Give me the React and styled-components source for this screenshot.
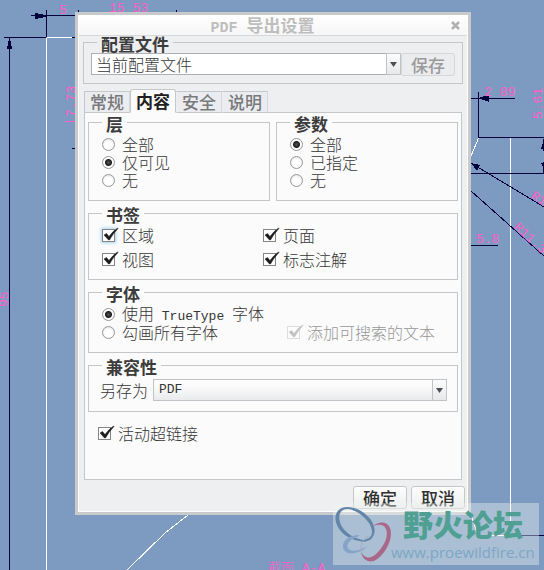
import React, { useState } from "react";
import styled, { createGlobalStyle } from "styled-components";


const GlobalStyle = createGlobalStyle`
* { box-sizing: border-box; }
body {
    margin: 0;
    font-family: "Noto Sans CJK SC", sans-serif;
    font-size: 16px;
    font-weight: 300;
    color: #363636;
}
button, select, input { font: inherit; color: inherit; margin: 0; }
`

const Page = styled.main`
position: relative;
min-height: 100vh;
padding: 12px 73px 55px 75px;
overflow: hidden;
background: #7d9bc0;
`

const Drawing = styled.svg`
position: absolute;
inset: 0;
width: 100%;
height: 100%;
& .edge { stroke: #fff; fill: none; }
& .dim { stroke: #00003c; fill: none; }
& .head { fill: #00003c; }
& text {
    fill: #ff5fc8;
    font-family: "Liberation Mono", "Noto Sans CJK SC", monospace;
    font-size: 13px;
}
`

const Dialog = styled.section`
position: relative;
border: 3px solid #c8cacc;
background: #eeeff1;
box-shadow: inset 0 0 0 1px #fff;
padding: 0 1px 3px;
`

const TitleBar = styled.header`
display: flex;
align-items: center;
height: 21px;
padding: 0 7px 0 9px;
border-bottom: 1px solid #d6d8da;
background: linear-gradient(#fff, #f6f6f7);
`

const Title = styled.h1`
flex: 1;
margin: 0;
padding: 2px 14px 0 0;
text-align: center;
font-size: 17px;
line-height: 20px;
font-weight: 700;
color: #bebebe;
`

const CloseButton = styled.button`
display: flex;
padding: 0;
border: none;
background: none;
color: #b0b0b0;
`

const Latin = styled.span`
font-family: "Liberation Mono", monospace;
font-size: ${p => p.$large ? "15px" : "13px"};
line-height: 16px;
white-space: pre;
`

const Group = styled.fieldset`
min-width: 0;
margin: ${p => p.$margin || 0};
padding: ${p => p.$padding || "7px 10px 11px 13px"};
border: 1px solid #c4c6c9;
`

const GroupTitle = styled.legend`
margin-left: ${p => p.$inset || 0};
padding: 3px 4px 0;
font-size: 17px;
line-height: 9px;
font-weight: 700;
color: #3c3c3c;
`

const ProfileRow = styled.div`
display: flex;
align-items: flex-start;
`

const SelectBox = styled.span`
position: relative;
display: flex;
flex: 1;
height: 22px;
`

const Select = styled.select`
appearance: none;
width: 100%;
height: 22px;
padding: 0 20px 0 ${p => p.$plain ? "4px" : "5px"};
border: 1px solid ${p => p.$plain ? "#aeb0b2" : "#c0c4c8"};
border-radius: 0;
background: ${p => p.$plain ? "#fff" : "linear-gradient(#fcfcfc 30%, #e8eaec)"};
font-family: ${p => p.$plain ? "inherit" : `"Liberation Mono", monospace`};
font-size: ${p => p.$plain ? "16px" : "13px"};
line-height: 20px;
`

const SelectArrow = styled.span`
position: absolute;
top: 0;
right: 0;
display: flex;
align-items: center;
justify-content: center;
width: 15px;
height: 22px;
border: 1px solid #c0c4c8;
background: linear-gradient(#fcfcfc, #e6e8ea);
pointer-events: none;
`

const Button = styled.button`
width: 54px;
height: 23px;
padding: 0;
border: 1px solid #c4c8cb;
border-radius: 3px;
background: linear-gradient(#fdfdfd, #eceded);
font-size: 17px;
line-height: 20px;
font-weight: 500;
color: #303030;
&:disabled {
    border-color: #d4d6d8;
    background: #ebecee;
    color: #9a9a9a;
}
`

const TabList = styled.div`
display: flex;
align-items: flex-end;
margin: 5px 5px -1px;
`

const Tab = styled.button`
position: relative;
width: 46px;
height: ${p => p.$active ? "24px" : "22px"};
padding: 0 0 ${p => p.$active ? "1px" : "0"};
border: 1px solid #c4c8cb;
border-left-color: ${p => p.$active || p.$first ? "#c4c8cb" : "#eceef0"};
border-right-color: ${p => p.$active ? "#c4c8cb" : "#d6d9dc"};
border-bottom-color: ${p => p.$active ? "#fbfbfb" : "#c4c8cb"};
border-radius: ${p => p.$active ? "3px 3px 0 0" : "0"};
background: ${p => p.$active ? "#fbfbfb" : "#ebecef"};
font-size: 17px;
line-height: 20px;
font-weight: ${p => p.$active ? 700 : 500};
color: ${p => p.$active ? "#202020" : "#77797c"};
`

const TabPanel = styled.div`
display: flex;
flex-direction: column;
gap: 6px;
margin: 0 5px;
padding: 3px 3px 37px;
border: 1px solid #c4c8cb;
background: #fbfbfb;
`

const Columns = styled.div`
display: grid;
grid-template-columns: 1fr 1fr;
gap: ${p => p.$gap || 0};
padding-right: ${p => p.$right || 0};
`

const OptionRow = styled.div`
display: flex;
justify-content: space-between;
padding-right: 12px;
`

const Option = styled.label`
display: flex;
align-items: center;
gap: 7px;
height: ${p => p.$tall ? "24px" : "18px"};
margin: ${p => p.$margin || 0};
line-height: 18px;
color: ${p => p.$muted ? "#979797" : "inherit"};
`

const RadioInput = styled.input`
appearance: none;
width: 13px;
height: 13px;
border: 1px solid #989898;
border-radius: 50%;
background: radial-gradient(circle at 50% 60%, #fff 40%, #dcdcdc);
&:checked {
    background: radial-gradient(circle, #555 0, #1c1c1c 3px, #fff 4px, #f4f4f4);
}
`

const CheckBox = styled.span`
position: relative;
display: flex;
opacity: ${p => p.$muted ? .25 : 1};
& svg {
    position: absolute;
    top: -2px;
    left: 0;
    pointer-events: none;
}
& input:not(:checked) + svg { display: none; }
`

const CheckInput = styled.input`
appearance: none;
width: 13px;
height: 13px;
border: 1px solid #858585;
background: #fff;
box-shadow: ${p => p.$glow ? "0 0 3px 1px #a4d4ee" : "none"};
`

const SaveAsRow = styled.label`
display: flex;
align-items: center;
gap: 5px;
line-height: 22px;
`

const Footer = styled.footer`
display: flex;
justify-content: flex-end;
gap: 4px;
padding: 6px 2px 0;
`

const Watermark = styled.aside`
position: absolute;
right: 5px;
bottom: 5px;
display: flex;
width: 206px;
height: 62px;
background: rgba(240, 244, 242, .4);
pointer-events: none;
`

const WatermarkText = styled.div`
display: flex;
flex-direction: column;
margin-left: -2px;
& strong {
    padding-left: 12px;
    font-size: 30px;
    line-height: 40px;
    font-weight: 900;
    color: #4fa093;
}
& span {
    font-family: "Open Sans", sans-serif;
    font-size: 15px;
    line-height: 18px;
    font-weight: 400;
    color: #7ca6c4;
}
`


const Radio = ({ label, ...nprops }) => {
    return (
        <Option>
            <RadioInput type="radio" {...nprops} />
            <span>{label}</span>
        </Option>
    )
}

const Check = ({ label, tall, margin, glow, disabled }) => {
    return (
        <Option $tall={tall} $margin={margin} $muted={disabled}>
            <CheckBox $muted={disabled}>
                <CheckInput type="checkbox" defaultChecked disabled={disabled} $glow={glow} />
                <svg width="17" height="15" viewBox="0 0 17 15" aria-hidden="true">
                    <path d="M2 8 L4.5 6.5 L7 9.5 Q11 4 15.5 1 L16 1.5 Q11 6.5 7.5 13 L6.5 13 Z" fill="#1c1c1c" stroke="#1c1c1c" strokeWidth=".5" />
                </svg>
            </CheckBox>
            <span>{label}</span>
        </Option>
    )
}

const Arrow = () => {
    return (
        <SelectArrow>
            <svg width="7" height="5" viewBox="0 0 7 5"><path d="M0 0H7L3.5 5Z" fill="#4c5056" /></svg>
        </SelectArrow>
    )
}

const CadDrawing = () => {
    return (
        <Drawing aria-hidden="true">
            <g shapeRendering="crispEdges">
                <path className="edge" d="M46.5 38V2000 M47 37.5H72 M510.500 138V535 M479 137L471 156 M471 515L478 535.500H510 M188 515L165 533L127 570" />
                <path className="dim" d="M31 15.500H78 M46.500 10V37 M78.500 10V14 M176.500 10V14 M4 37.500H46 M72 37.500H76 M9.500 38V2000 M72 148.500H76" />
                <path className="dim" d="M471 98.500H515 M478.500 92V137 M478 137.500H2000 M471 173.500H2000 M471 163L544 207 M471 191L544 256 M471 245.500H498 M510 535.500H2000 M543.500 139V151 M543.500 162V173" />
                <path className="head" d="M35 13L46 15V17L35 19Z M9 38H10L12 49H7Z M478 98L489 95V102Z M471 163L480 165L477 171Z M543 143L541 149H544Z M541 163H544V168Z" />
                <path d="M65 121.500H76" stroke="#ff5fc8" />
            </g>
            <text x="59" y="14">5</text>
            <text x="109" y="12">15 53</text>
            <text transform="translate(75 117) rotate(-90)">7.73</text>
            <text transform="translate(8 307) rotate(-90)">95</text>
            <text x="484" y="96">2 89</text>
            <text transform="translate(542 119) rotate(-90)">5.61</text>
            <text transform="translate(530 198) rotate(30)">R1</text>
            <text transform="translate(513 228) rotate(42)">R11.3</text>
            <text x="476" y="243">5.8</text>
            <text x="268" y="572">截面 A-A</text>
        </Drawing>
    )
}

const ForumLogo = () => {
    return (
        <svg width="60" height="62" viewBox="0 0 60 62" fill="none" aria-hidden="true">
            <path fillRule="evenodd" fill="#6285a8" d="M14 4C4 4 0 13 4 22C8 32 18 37 31 39L37 37C43 32 43 25 38 17C32 9 23 4 14 4Z M15 6C23 7 31 13 36 20C40 27 40 32 36 35L31 37C22 36 12 30 8 22C4 13 7 6 15 6Z" />
            <path fill="#84a3c7" d="M26 32C17 32 10 37 10 43C10 50 17 52 25 49C29 48 32 46 34 43C28 47 22 49 17 47C12 44 14 37 26 33Z" />
            <path fill="#a9688a" d="M40 23C46 18 54 18 57 25C61 35 52 53 41 58C34 60 29 55 28 49C32 56 38 56 43 51C51 44 56 33 53 26C51 21 46 21 40 23Z" />
            <path d="M28 49C27 42 30 36 36 33" stroke="#b0a6c4" strokeWidth="1" />
        </svg>
    )
}


const App = () => {
    const [tab, setTab] = useState("内容")

    return (
        <>
            <GlobalStyle />
            <Page>
                <CadDrawing />
                <Dialog role="dialog" aria-labelledby="dialog-title">
                    <TitleBar>
                        <Title id="dialog-title"><Latin $large>PDF </Latin>导出设置</Title>
                        <CloseButton type="button" aria-label="关闭">
                            <svg width="9" height="9" viewBox="0 0 9 9"><path d="M1 1L8 8M8 1L1 8" stroke="currentColor" strokeWidth="2.500" /></svg>
                        </CloseButton>
                    </TitleBar>

                    <Group $margin="0 4px" $padding="5px 7px 7px">
                        <GroupTitle $inset="6px">配置文件</GroupTitle>
                        <ProfileRow>
                            <SelectBox>
                                <Select $plain aria-label="配置文件"><option>当前配置文件</option></Select>
                                <Arrow />
                            </SelectBox>
                            <Button type="button" disabled>保存</Button>
                        </ProfileRow>
                    </Group>

                    <TabList role="tablist">
                        {["常规", "内容", "安全", "说明"].map((name, i) =>
                            <Tab key={name} type="button" role="tab" aria-selected={tab === name} $first={i === 0} $active={tab === name} onClick={() => setTab(name)}>{name}</Tab>
                        )}
                    </TabList>

                    <TabPanel role="tabpanel">
                        <Columns $gap="6px">
                            <Group>
                                <GroupTitle>层</GroupTitle>
                                <Radio name="layer" label="全部" />
                                <Radio name="layer" label="仅可见" defaultChecked />
                                <Radio name="layer" label="无" />
                            </Group>
                            <Group>
                                <GroupTitle>参数</GroupTitle>
                                <Radio name="params" label="全部" defaultChecked />
                                <Radio name="params" label="已指定" />
                                <Radio name="params" label="无" />
                            </Group>
                        </Columns>

                        <Group $padding="4px 10px 8px 13px">
                            <GroupTitle>书签</GroupTitle>
                            <Columns $right="23px">
                                <Check tall glow label="区域" />
                                <Check tall label="页面" />
                                <Check tall label="视图" />
                                <Check tall label="标志注解" />
                            </Columns>
                        </Group>

                        <Group>
                            <GroupTitle>字体</GroupTitle>
                            <Radio name="font" defaultChecked label={<>使用<Latin> TrueType </Latin>字体</>} />
                            <OptionRow>
                                <Radio name="font" label="勾画所有字体" />
                                <Check disabled label="添加可搜索的文本" />
                            </OptionRow>
                        </Group>

                        <Group $padding="8px 10px 10px 11px">
                            <GroupTitle $inset="2px">兼容性</GroupTitle>
                            <SaveAsRow>
                                另存为
                                <SelectBox>
                                    <Select><option>PDF</option></Select>
                                    <Arrow />
                                </SelectBox>
                            </SaveAsRow>
                        </Group>

                        <Check margin="6px 10px 0" label="活动超链接" />
                    </TabPanel>

                    <Footer>
                        <Button type="button">确定</Button>
                        <Button type="button">取消</Button>
                    </Footer>
                </Dialog>

                <Watermark>
                    <ForumLogo />
                    <WatermarkText>
                        <strong>野火论坛</strong>
                        <span>www.proewildfire.cn</span>
                    </WatermarkText>
                </Watermark>
            </Page>
        </>
    )
}

export default App
